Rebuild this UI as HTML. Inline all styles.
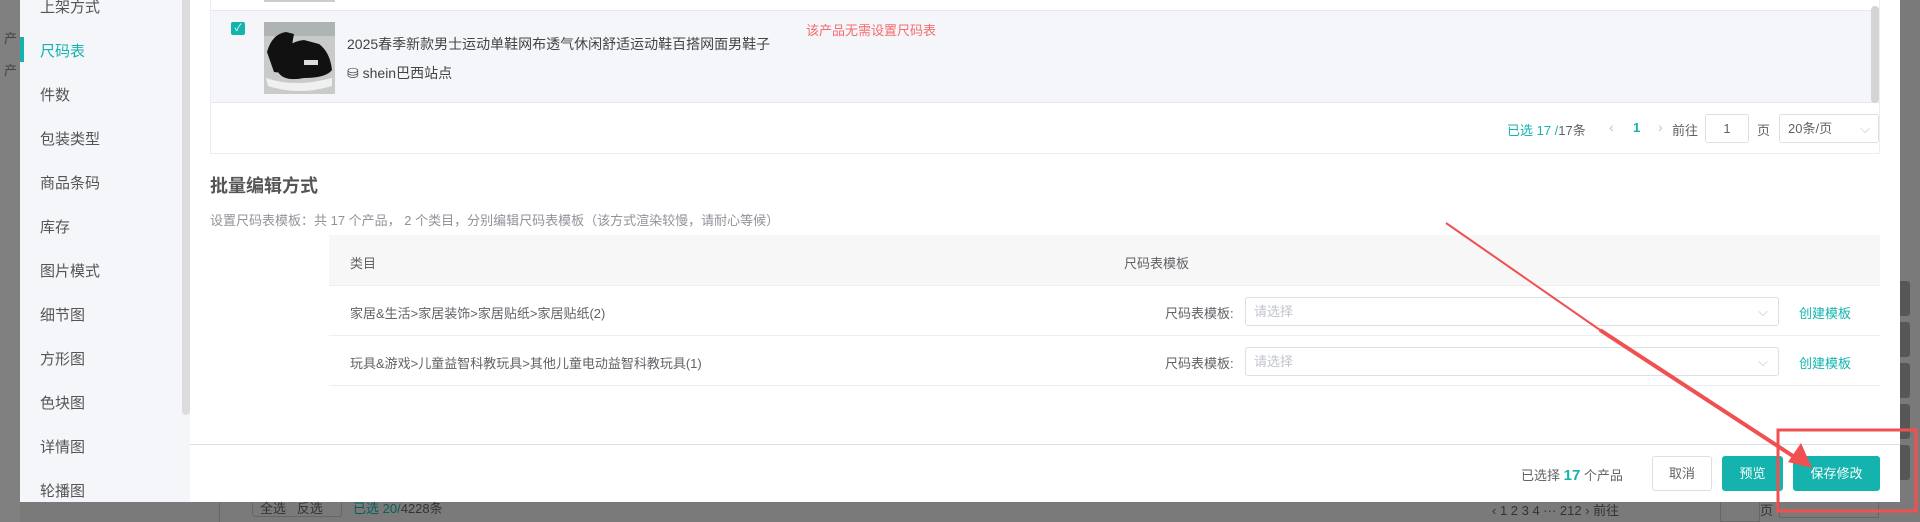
<!DOCTYPE html>
<html><head><meta charset="utf-8"><style>
*{box-sizing:border-box;margin:0;padding:0}
body{width:1920px;height:522px;overflow:hidden;background:#7a7a7a;font-family:"Liberation Sans","Noto Sans CJK SC",sans-serif;position:relative;color:#606266}
.abs{position:absolute}
.side{left:20px;top:0;width:170px;height:502px;background:#f5f6fa}
.side div{position:absolute;left:20px;font-size:15px;color:#555}
.thumb{left:182px;top:0;width:8px;height:415px;background:#dcdcdc;border-radius:0 0 4px 4px}
.modal{left:190px;top:0;width:1710px;height:502px;background:#fff}
.t{font-size:14px;white-space:nowrap}
.blk{position:absolute;left:1900px;width:10px;height:35px;background:#575757;border-radius:0 3px 3px 0}
</style></head><body>
<div class="abs" style="left:0;top:0;width:20px;height:522px;background:#808080"></div>
<div class="abs t" style="left:4px;top:28px;color:#444;font-size:13px">产</div>
<div class="abs t" style="left:4px;top:60px;color:#444;font-size:13px">产</div>
<div class="abs side">
<div style="top:-4px">上架方式</div>
<div style="top:40px;color:#14b3ad">尺码表</div>
<div style="top:84px">件数</div>
<div style="top:128px">包装类型</div>
<div style="top:172px">商品条码</div>
<div style="top:216px">库存</div>
<div style="top:260px">图片模式</div>
<div style="top:304px">细节图</div>
<div style="top:348px">方形图</div>
<div style="top:392px">色块图</div>
<div style="top:436px">详情图</div>
<div style="top:480px">轮播图</div>
</div>
<div class="abs" style="left:20px;top:37px;width:4px;height:25px;background:#14b3ad"></div>
<div class="abs thumb"></div>
<div class="abs modal"></div>
<div class="abs" style="left:210px;top:0;width:1670px;height:154px;border:1px solid #ebeef5;border-top:none"></div>
<div class="abs" style="left:264px;top:0;width:71px;height:2px;background:#ccc"></div>
<div class="abs" style="left:211px;top:10px;width:1668px;height:93px;background:#f5f6fa;border-top:1px solid #e6e8ef;border-bottom:1px solid #e6e8ef"></div>
<div class="abs" style="left:231px;top:22px;width:14px;height:13px;background:#14b3ad;border-radius:2px;color:#fff;font-size:10px;text-align:center;line-height:13px">✓</div>
<svg class="abs" style="left:264px;top:22px" width="71" height="72"><rect width="71" height="72" fill="#c9cbcb"/><rect width="71" height="14" fill="#aeb4b4"/><path d="M3 30 Q8 12 22 10 L30 12 Q26 30 30 45 Q24 52 10 50 Z" fill="#111"/><path d="M14 40 Q20 20 40 18 L55 22 Q66 30 68 48 Q62 56 40 56 Q20 60 14 50Z" fill="#111"/><path d="M2 56 Q30 66 68 56 L68 64 Q35 74 4 64Z" fill="#f0f0f0"/><rect x="40" y="38" width="14" height="5" fill="#ddd"/></svg>
<div class="abs t" style="left:347px;top:34px;color:#444;font-size:14px">2025春季新款男士运动单鞋网布透气休闲舒适运动鞋百搭网面男鞋子</div>
<div class="abs t" style="left:347px;top:63px;color:#444;font-size:14px">⛁ shein巴西站点</div>
<div class="abs t" style="left:806px;top:20px;color:#f56c6c;font-size:13px">该产品无需设置尺码表</div>
<div class="abs" style="left:1871px;top:6px;width:8px;height:97px;background:#d4d4d4;border-radius:4px"></div>
<div class="abs t" style="left:1507px;top:120px;font-size:13px;color:#14b3ad">已选 17 /<span style="color:#606266">17条</span></div>
<div class="abs t" style="left:1609px;top:119px;color:#c0c4cc">‹</div>
<div class="abs t" style="left:1633px;top:120px;color:#14b3ad;font-weight:bold;font-size:13px">1</div>
<div class="abs t" style="left:1658px;top:119px;color:#c0c4cc">›</div>
<div class="abs t" style="left:1672px;top:120px;font-size:13px">前往</div>
<div class="abs" style="left:1705px;top:114px;width:44px;height:29px;border:1px solid #dcdfe6;border-radius:3px;text-align:center;line-height:27px;font-size:13px">1</div>
<div class="abs t" style="left:1757px;top:120px;font-size:13px">页</div>
<div class="abs" style="left:1779px;top:114px;width:100px;height:29px;border:1px solid #dcdfe6;border-radius:3px;font-size:13px;line-height:27px;padding-left:8px">20条/页<span style="position:absolute;right:8px;color:#c0c4cc">⌵</span></div>
<div class="abs t" style="left:210px;top:172px;font-size:18px;font-weight:bold;color:#555">批量编辑方式</div>
<div class="abs t" style="left:210px;top:210px;font-size:13px;color:#909399">设置尺码表模板：共 17 个产品， 2 个类目，分别编辑尺码表模板（该方式渲染较慢，请耐心等候）</div>
<div class="abs" style="left:329px;top:235px;width:1551px;height:51px;background:#f7f7f7;border-bottom:1px solid #ebeef5"></div>
<div class="abs t" style="left:350px;top:253px;font-size:13px">类目</div>
<div class="abs t" style="left:1124px;top:253px;font-size:13px">尺码表模板</div>
<div class="abs" style="left:329px;top:335px;width:1551px;height:1px;background:#ebeef5"></div>
<div class="abs" style="left:329px;top:385px;width:1551px;height:1px;background:#ebeef5"></div>
<div class="abs t" style="left:350px;top:303px;font-size:13px">家居&amp;生活&gt;家居装饰&gt;家居贴纸&gt;家居贴纸(2)</div>
<div class="abs t" style="left:350px;top:353px;font-size:13px">玩具&amp;游戏&gt;儿童益智科教玩具&gt;其他儿童电动益智科教玩具(1)</div>
<div class="abs t" style="left:1165px;top:303px;font-size:13px">尺码表模板:</div>
<div class="abs t" style="left:1165px;top:353px;font-size:13px">尺码表模板:</div>
<div class="abs" style="left:1245px;top:297px;width:534px;height:29px;border:1px solid #dcdfe6;border-radius:3px;font-size:13px;line-height:27px;padding-left:8px;color:#c0c4cc">请选择<span style="position:absolute;right:10px">⌵</span></div>
<div class="abs" style="left:1245px;top:347px;width:534px;height:29px;border:1px solid #dcdfe6;border-radius:3px;font-size:13px;line-height:27px;padding-left:8px;color:#c0c4cc">请选择<span style="position:absolute;right:10px">⌵</span></div>
<div class="abs t" style="left:1799px;top:303px;font-size:13px;color:#14b3ad">创建模板</div>
<div class="abs t" style="left:1799px;top:353px;font-size:13px;color:#14b3ad">创建模板</div>
<div class="abs" style="left:190px;top:444px;width:1710px;height:1px;background:#dcdfe6"></div>
<div class="abs t" style="left:1521px;top:465px;font-size:13px">已选择 <b style="color:#14b3ad;font-size:15px">17</b> 个产品</div>
<div class="abs" style="left:1652px;top:456px;width:60px;height:35px;border:1px solid #dcdfe6;border-radius:3px;text-align:center;line-height:33px;font-size:13px">取消</div>
<div class="abs" style="left:1722px;top:456px;width:61px;height:35px;background:#14b3ad;border-radius:3px;text-align:center;line-height:35px;font-size:13px;color:#fff">预览</div>
<div class="abs" style="left:1793px;top:456px;width:87px;height:35px;background:#14b3ad;border-radius:3px;text-align:center;line-height:35px;font-size:13px;color:#fff">保存修改</div>
<div class="abs" style="left:219px;top:502px;width:1px;height:20px;background:#666"></div>
<div class="abs" style="left:252px;top:502px;width:90px;height:15px;border:1px solid #666;border-top:none;border-radius:0 0 3px 3px"></div>
<div class="abs t" style="left:260px;top:498px;font-size:13px;color:#333">全选&nbsp;&nbsp;&nbsp;反选</div>
<div class="abs t" style="left:353px;top:498px;font-size:13px;color:#0a5e5a">已选 20/<span style="color:#333">4228条</span></div>
<div class="abs t" style="left:1492px;top:500px;font-size:13px;color:#333">‹ 1 2 3 4 ··· 212 › 前往</div>
<div class="abs" style="left:1720px;top:502px;width:40px;height:20px;border:1px solid #666;border-top:none"></div>
<div class="abs t" style="left:1760px;top:500px;font-size:13px;color:#333">页</div>
<div class="abs" style="left:1779px;top:502px;width:100px;height:16px;border:1px solid #666;border-top:none"></div>
<div class="abs" style="left:1900px;top:0;width:20px;height:522px;background:#7a7a7a"></div>
<div class="blk" style="top:281px"></div>
<div class="blk" style="top:322px"></div>
<div class="blk" style="top:363px"></div>
<div class="blk" style="top:404px"></div>
<div class="blk" style="top:445px"></div>
<svg class="abs" style="left:0;top:0" width="1920" height="522">
<line x1="1446" y1="223" x2="1600" y2="330" stroke="#f0504f" stroke-width="2"/>
<line x1="1600" y1="330" x2="1796" y2="458" stroke="#f0504f" stroke-width="4"/>
<polygon points="1788,462 1801,443 1812,468" fill="#f0504f"/>
<rect x="1778" y="430" width="138" height="81" fill="none" stroke="#f0504f" stroke-width="3"/>
</svg>
</body></html>
